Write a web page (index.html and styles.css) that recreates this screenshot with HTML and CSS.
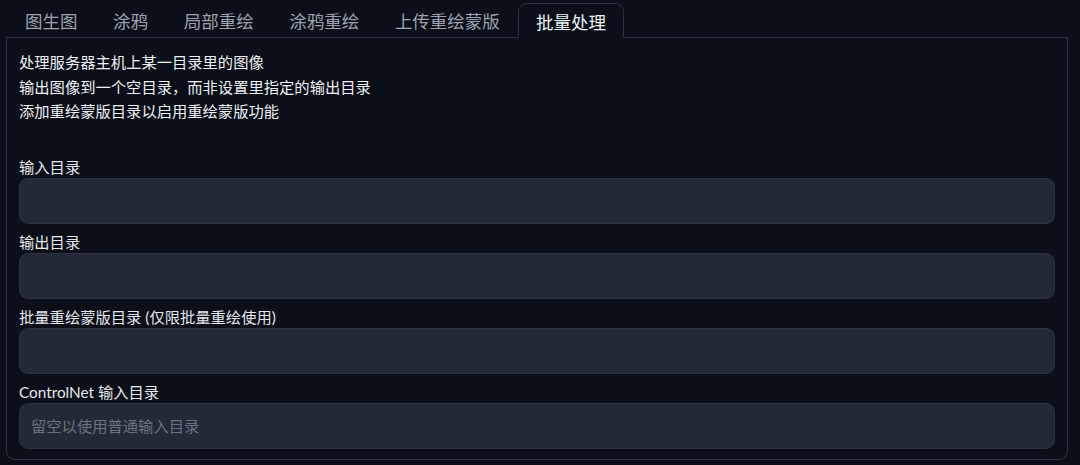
FILE: index.html
```html
<!DOCTYPE html>
<html lang="zh">
<head>
<meta charset="utf-8">
<link rel="stylesheet" href="styles.css">
</head>
<body>
<div class="app">
  <div class="tabs">
    <div class="tab">图生图</div>
    <div class="tab">涂鸦</div>
    <div class="tab">局部重绘</div>
    <div class="tab">涂鸦重绘</div>
    <div class="tab">上传重绘蒙版</div>
    <div class="tab active">批量处理</div>
    <div class="tab-fill"></div>
  </div>
  <div class="panel">
    <div class="prose">
      <p>处理服务器主机上某一目录里的图像</p>
      <p>输出图像到一个空目录，而非设置里指定的输出目录</p>
      <p>添加重绘蒙版目录以启用重绘蒙版功能</p>
    </div>
    <div class="fields">
      <label class="field">
        <span class="label">输入目录</span>
        <input class="input" type="text">
      </label>
      <label class="field">
        <span class="label">输出目录</span>
        <input class="input" type="text">
      </label>
      <label class="field">
        <span class="label">批量重绘蒙版目录 (仅限批量重绘使用)</span>
        <input class="input" type="text">
      </label>
      <label class="field">
        <span class="label">ControlNet 输入目录</span>
        <input class="input" type="text" placeholder="留空以使用普通输入目录">
      </label>
    </div>
  </div>
</div>
</body>
</html>
```

FILE: styles.css
```css
* { box-sizing: border-box; }
html, body {
  margin: 0;
  padding: 0;
  background: #0b0f19;
}
body {
  font-family: Lato, "Noto Sans CJK SC", sans-serif;
  color: #e5e7eb;
  width: 1080px;
  height: 465px;
  overflow: hidden;
}
.app {
  padding: 3px 12px 0 6px;
}
.tabs {
  display: flex;
  align-items: flex-end;
  height: 35px;
}
.tab {
  height: 35px;
  padding: 0 17.8px;
  font-size: 17.5px;
  line-height: 37px;
  color: #9ca3af;
  border-bottom: 1px solid #2a3140;
  white-space: nowrap;
}
.tab:first-child { padding-left: 19px; }
.tab.active {
  color: #eef0f3;
  border: 1px solid #2a3140;
  border-bottom: 1px solid #0b0f19;
  border-radius: 9px 9px 0 0;
  padding: 0 17.4px;
}
.tab-fill {
  flex: 1;
  height: 35px;
  border-bottom: 1px solid #2a3140;
}
.panel {
  border: 1px solid #2a3140;
  border-top: none;
  border-radius: 0 0 9px 9px;
  padding: 12px 12px 10px 12px;
  height: 422px;
}
.prose p {
  margin: 0;
  font-size: 15.3px;
  line-height: 24.5px;
  color: #eef0f3;
}
.fields {
  margin-top: 32px;
  display: flex;
  flex-direction: column;
  gap: 7px;
}
.field {
  display: flex;
  flex-direction: column;
}
.label {
  font-size: 15.3px;
  line-height: 22px;
  color: #e5e7eb;
}
.input {
  height: 46px;
  width: 100%;
  background: #222a38;
  border: 1px solid #2b3342;
  border-radius: 9px;
  padding: 0 11px;
  font-family: Lato, "Noto Sans CJK SC", sans-serif;
  font-size: 15.3px;
  color: #e5e7eb;
  outline: none;
}
.input::placeholder {
  color: #6b7280;
}
```
